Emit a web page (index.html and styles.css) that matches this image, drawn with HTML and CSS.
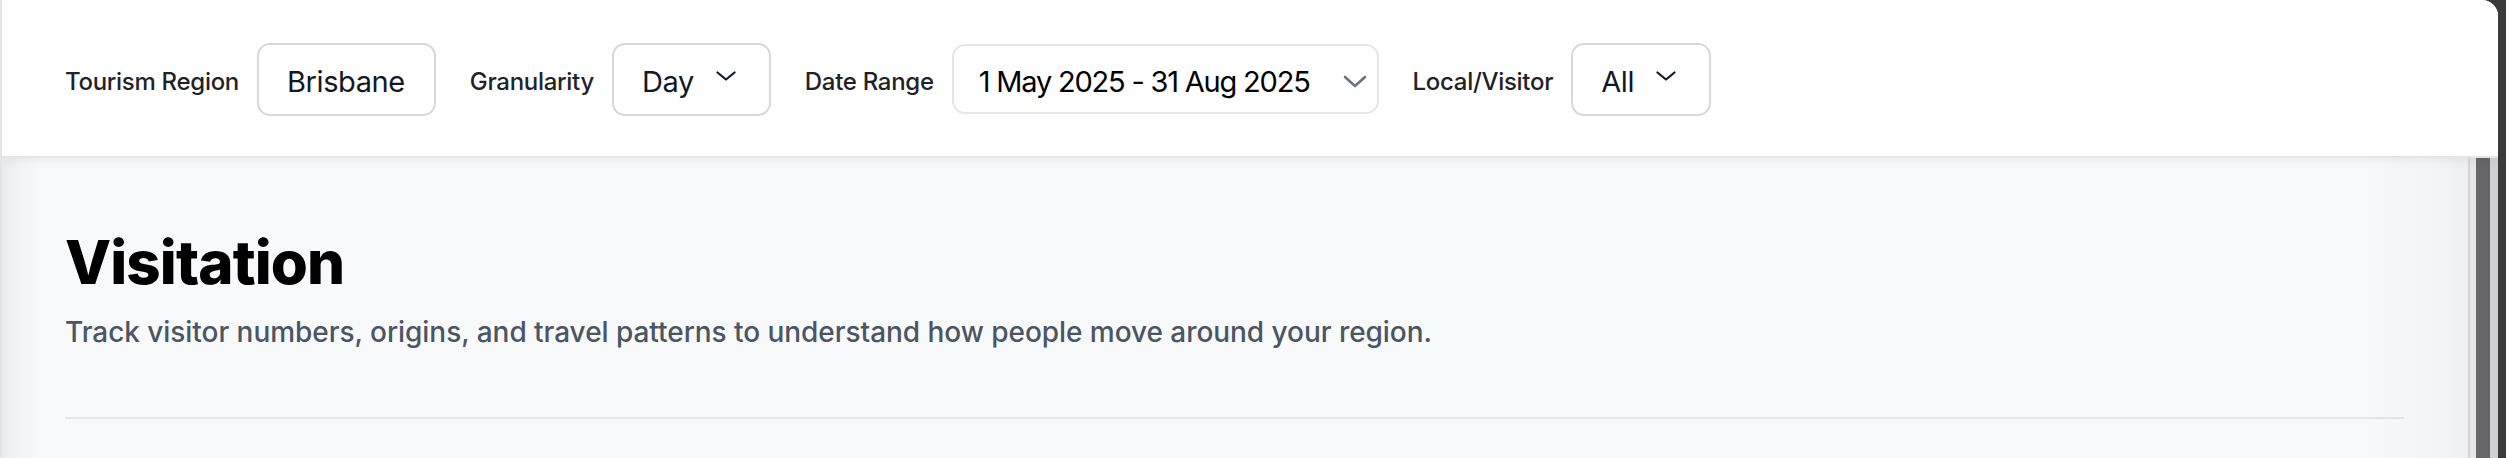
FILE: index.html
```html
<!DOCTYPE html>
<html lang="en">
<head>
<meta charset="utf-8">
<title>Visitation</title>
<link rel="stylesheet" href="styles.css">
</head>
<body>
<div class="window">
  <header class="filters">
    <div class="filter">
      <span class="filter-label">Tourism Region</span>
      <div class="select select-static"><span class="value">Brisbane</span></div>
    </div>
    <div class="filter">
      <span class="filter-label">Granularity</span>
      <div class="select">
        <span class="value">Day</span>
        <svg class="chev" width="20" height="10" viewBox="0 0 20 10"><path d="M1.5 1.5 L10 8.5 L18.5 1.5" fill="none" stroke="#111827" stroke-width="2.2" stroke-linecap="round" stroke-linejoin="round"/></svg>
      </div>
    </div>
    <div class="filter">
      <span class="filter-label">Date Range</span>
      <div class="select date-select">
        <span class="value date-value">1 May 2025 - 31 Aug 2025</span>
        <svg class="chev-date" width="24" height="13" viewBox="0 0 24 13"><path d="M2 2 L12 11 L22 2" fill="none" stroke="#6b7280" stroke-width="2.6" stroke-linecap="round" stroke-linejoin="round"/></svg>
      </div>
    </div>
    <div class="filter">
      <span class="filter-label">Local/Visitor</span>
      <div class="select">
        <span class="value">All</span>
        <svg class="chev" width="20" height="10" viewBox="0 0 20 10"><path d="M1.5 1.5 L10 8.5 L18.5 1.5" fill="none" stroke="#111827" stroke-width="2.2" stroke-linecap="round" stroke-linejoin="round"/></svg>
      </div>
    </div>
  </header>
  <div class="body-area">
    <main class="content">
      <h1 class="title">Visitation</h1>
      <p class="subtitle">Track visitor numbers, origins, and travel patterns to understand how people move around your region.</p>
      <hr class="divider">
    </main>
    <div class="scrollbar">
      <div class="scroll-gap"></div>
      <div class="scroll-thumb"></div>
      <div class="scroll-edge"></div>
    </div>
  </div>
</div>
</body>
</html>
```

FILE: styles.css
```css
* { box-sizing: border-box; }

html, body {
  margin: 0;
  padding: 0;
  height: 100%;
}

body {
  background: #3b3b3c;
  font-family: Inter, "Noto Sans", "Liberation Sans", sans-serif;
  overflow: hidden;
}

.window {
  position: relative;
  width: 2498px;
  height: 458px;
  display: flex;
  flex-direction: column;
  border-top-right-radius: 16px;
  overflow: hidden;
  background: #f8f9fa;
  border-left: 2px solid #e4e5e8;
}

.window::after {
  content: "";
  position: absolute;
  inset: 0;
  pointer-events: none;
  background:
    linear-gradient(to right, rgba(0,0,0,0.05) 0, rgba(0,0,0,0.02) 18px, rgba(0,0,0,0) 40px),
    linear-gradient(to left, rgba(0,0,0,0.06) 0, rgba(0,0,0,0.02) 60px, rgba(0,0,0,0) 140px);
}

.filters {
  flex: 0 0 158px;
  height: 158px;
  background: #ffffff;
  border-bottom: 2px solid #e4e5e8;
  box-shadow: 0 3px 10px rgba(0,0,0,0.06);
  display: flex;
  align-items: center;
  gap: 34px;
  padding: 2px 0 0 63px;
  position: relative;
  z-index: 1;
}

.filter {
  display: flex;
  align-items: center;
  gap: 18px;
}

.filter-label {
  font-size: 24px;
  font-weight: 500;
  color: #1f2328;
  letter-spacing: -0.3px;
  padding-top: 4px;
}

.select {
  height: 73px;
  border: 2px solid #d5d8dd;
  border-radius: 13px;
  background: #fff;
  display: flex;
  align-items: center;
  gap: 22px;
  padding: 0 33px 0 28px;
  font-size: 29px;
  font-weight: 400;
  color: #111827;
  letter-spacing: -0.4px;
}

.value {
  padding-top: 4px;
}

.select-static {
  padding: 0 29px 0 28px;
}

.chev {
  display: block;
  margin-top: -6px;
}

.date-select {
  height: 70px;
  border-color: #e4e5e7;
  color: #000;
  padding: 0 10px 0 25px;
  gap: 33px;
}

.date-value {
  letter-spacing: -1.2px;
}

.chev-date {
  display: block;
  margin-top: 4px;
}

.body-area {
  flex: 1;
  display: flex;
  min-height: 0;
}

.content {
  flex: 1;
  padding: 68px 64px 0 63px;
  display: flex;
  flex-direction: column;
}

.title {
  margin: 0;
  font-size: 60px;
  line-height: 72px;
  font-weight: 800;
  color: #000;
  letter-spacing: -0.9px;
}

.subtitle {
  margin: 15px 0 0;
  font-size: 28px;
  line-height: 38px;
  font-weight: 500;
  color: #4b5563;
  letter-spacing: -0.05px;
}

.divider {
  margin: 66px 0 0;
  border: 0;
  height: 2px;
  background: #e4e5e8;
}

.scrollbar {
  flex: 0 0 30px;
  display: flex;
  border-left: 2px solid #dcdde0;
  background: #f1f1f3;
}

.scroll-gap {
  width: 6px;
}

.scroll-thumb {
  width: 14px;
  background: #6c6c6f;
}

.scroll-edge {
  flex: 1;
  background: #dedee2;
}
```
